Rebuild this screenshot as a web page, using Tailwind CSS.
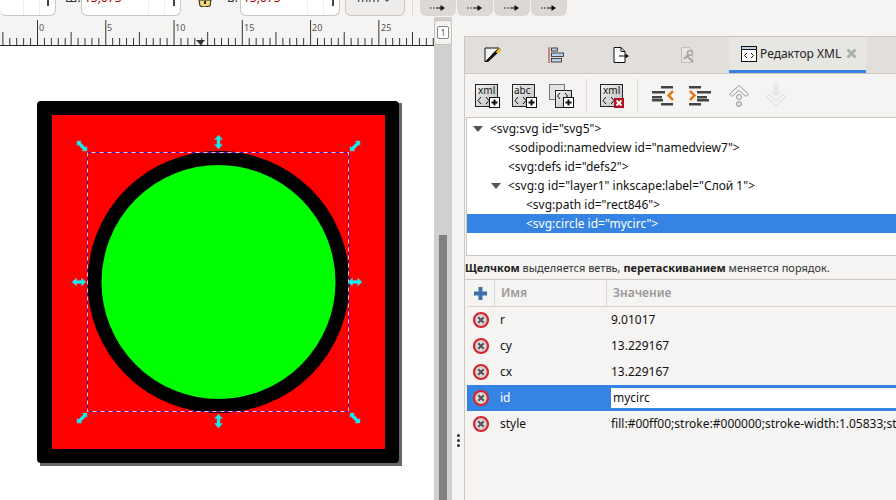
<!DOCTYPE html>
<html lang="ru">
<head>
<meta charset="UTF-8" />
<title>Inkscape - XML</title>
<script src="https://cdn.jsdelivr.net/npm/@tailwindcss/browser@4"></script>
</head>
<body class="m-0 bg-[#f5f4f2] font-['Noto_Sans','Liberation_Sans',sans-serif] text-[#111]">
<svg width="0" height="0" class="absolute">
  <defs>
    <linearGradient id="boxfill" x1="0" y1="0" x2="1" y2="1"><stop offset="0" stop-color="#f4f4f4"/><stop offset="1" stop-color="#bbb"/></linearGradient>
    <radialGradient id="delfill" cx=".5" cy=".5" r=".5"><stop offset="0" stop-color="#f2f2f2"/><stop offset="1" stop-color="#c9c9c9"/></radialGradient>
    <pattern id="ticks" patternUnits="userSpaceOnUse" x="37" y="0" width="68.27" height="28">
      <path d="M.5 3V28M7.3 21V28M14.2 21V28M21 21V28M27.8 21V28M34.6 15V28M41.5 21V28M48.3 21V28M55.1 21V28M62 21V28" stroke="#333" stroke-width="1" shape-rendering="crispEdges" fill="none"/>
    </pattern>
    <symbol id="del" viewBox="0 0 18 18">
      <circle cx="9" cy="9" r="7" fill="url(#delfill)" stroke="#d8232a" stroke-width="2.2"/>
      <path d="M6.3 6.3l5.4 5.4M11.7 6.3l-5.4 5.4" stroke="#555" stroke-width="2.2"/>
    </symbol>
    <symbol id="plusbox" viewBox="0 0 11 11">
      <rect x=".5" y=".5" width="10" height="10" fill="#fff" stroke="#111"/>
      <path d="M5.5 2.5v6M2.5 5.5h6" stroke="#111" stroke-width="2"/>
    </symbol>
    <symbol id="arrowbtn" viewBox="0 0 16 8">
      <path d="M0 4h1.500M3 4h1.500M6 4h5" stroke="#111" stroke-width="1.200"/>
      <path d="M10.500 1l4.500 3-4.500 3z" fill="#111"/>
    </symbol>
    <symbol id="hdiag" viewBox="0 0 12 12">
      <path d="M1 1h4.500l-1 1.500 5 5 1.500-1V11H6l1-1.500-5-5-1 1z" fill="#00f5f5" stroke="#7fa5a5" stroke-width=".5"/>
    </symbol>
    <symbol id="hdiag2" viewBox="0 0 12 12">
      <path d="M11 1H6.500l1 1.500-5 5-1.500-1V11H6l-1-1.500 5-5 1 1z" fill="#00f5f5" stroke="#7fa5a5" stroke-width=".5"/>
    </symbol>
  </defs>
</svg>

<div class="relative flex h-[500px] w-[896px] flex-col overflow-hidden bg-[#f5f4f2]">
  <!-- top toolbar -->
  <div class="flex h-[17px] shrink-0 items-start text-[12px] leading-[12px]">
    <div class="relative h-[16px] w-[56px] overflow-hidden rounded-b-md border-r border-b border-[#cdc7c2] bg-white">
      <div class="absolute left-[23px] top-0 h-full w-px bg-[#eeecea]"></div>
      <div class="absolute left-[39px] top-0 h-full w-px bg-[#eeecea]"></div>
      <div class="absolute left-[47px] top-0 h-[6px] w-[2px] bg-[#444]"></div>
    </div>
    <span class="ml-[9px] mt-[-8px] w-[16px] text-[#333]">Ш:</span>
    <div class="relative h-[16px] w-[100px] overflow-hidden rounded-b-md border-x border-b border-[#cdc7c2] bg-white">
      <span class="absolute left-[2px] top-[-8px] text-[#a00]">13,073</span>
      <div class="absolute left-[66px] top-0 h-full w-px bg-[#eeecea]"></div>
      <div class="absolute left-[82px] top-0 h-full w-px bg-[#eeecea]"></div>
      <div class="absolute left-[91px] top-0 h-[6px] w-[2px] bg-[#444]"></div>
    </div>
    <svg class="ml-[17px]" width="14" height="7" viewBox="0 0 14 7"><path d="M1 0h12l-1 6-6 1-4-1z" fill="#f3d873" stroke="#222"/><rect x="6" y="1" width="2" height="3" fill="#222"/></svg>
    <span class="ml-[15px] mt-[-8px] w-[13px] text-[#333]">В:</span>
    <div class="relative h-[16px] w-[100px] overflow-hidden rounded-b-md border-x border-b border-[#cdc7c2] bg-white">
      <span class="absolute left-[2px] top-[-8px] text-[#a00]">13,073</span>
      <div class="absolute left-[66px] top-0 h-full w-px bg-[#eeecea]"></div>
      <div class="absolute left-[82px] top-0 h-full w-px bg-[#eeecea]"></div>
      <div class="absolute left-[91px] top-0 h-[6px] w-[2px] bg-[#444]"></div>
    </div>
    <div class="relative ml-[5px] h-[16px] w-[60px] overflow-hidden rounded-b-md border-x border-b border-[#cdc7c2] bg-[#eeedeb]">
      <span class="absolute left-[11px] top-[-8px] text-[#333]">mm</span>
      <span class="absolute left-[37px] top-[-2px] h-0 w-0 border-x-[4px] border-t-[4px] border-x-transparent border-t-[#555]"></span>
    </div>
    <div class="ml-[7px] h-[16px] w-px bg-[#dcd9d6]"></div>
    <div class="ml-[7px] flex gap-px">
      <div class="flex h-[16px] w-[36px] items-center justify-center rounded-b-md bg-[#dcd8d4]"><svg width="16" height="8"><use href="#arrowbtn"/></svg></div>
      <div class="flex h-[16px] w-[36px] items-center justify-center rounded-b-md bg-[#dcd8d4]"><svg width="16" height="8"><use href="#arrowbtn"/></svg></div>
      <div class="flex h-[16px] w-[36px] items-center justify-center rounded-b-md bg-[#dcd8d4]"><svg width="16" height="8"><use href="#arrowbtn"/></svg></div>
      <div class="flex h-[16px] w-[36px] items-center justify-center rounded-b-md bg-[#dcd8d4]"><svg width="16" height="8"><use href="#arrowbtn"/></svg></div>
    </div>
  </div>

  <div class="flex min-h-0 flex-1">
    <!-- ruler and canvas -->
    <div class="flex w-[434px] shrink-0 flex-col">
      <svg class="h-[29px] w-[434px] shrink-0 font-['Noto_Sans','Liberation_Sans',sans-serif]" viewBox="0 0 434 29">
        <rect width="434" height="28" fill="url(#ticks)"/>
        <rect y="28" width="434" height="1" fill="#222"/>
        <g font-size="9" fill="#555">
          <text x="39" y="14">0</text><text x="107" y="14">5</text><text x="175" y="14">10</text>
          <text x="244" y="14">15</text><text x="312" y="14">20</text><text x="381" y="14">25</text>
        </g>
        <path d="M196 23h9l-4.500 5z" fill="#333"/>
      </svg>
      <div class="relative min-h-0 flex-1 bg-white">
        <svg class="absolute left-0 top-0" width="434" height="454" viewBox="0 46 434 454">
          <rect x="40" y="103" width="362" height="363" fill="#666"/>
          <rect x="37" y="101" width="362" height="362" rx="4" fill="#000"/>
          <rect x="52" y="115" width="333" height="334" fill="#ff0000"/>
          <circle cx="218.500" cy="282" r="124" fill="#00ff00" stroke="#000" stroke-width="14"/>
          <rect x="87.500" y="152.500" width="261" height="259" fill="none" stroke="#ffc0c0" stroke-width="1"/>
          <rect x="87.500" y="152.500" width="261" height="259" fill="none" stroke="#3c10c8" stroke-width="1" stroke-dasharray="4 4"/>
          <use href="#hdiag" x="76" y="140" width="12" height="12"/>
          <use href="#hdiag2" x="349" y="140" width="12" height="12"/>
          <use href="#hdiag2" x="76" y="412" width="12" height="12"/>
          <use href="#hdiag" x="349" y="412" width="12" height="12"/>
          <path id="hv" d="M218.500 135l4 4.500h-2.500v5h2.500l-4 4.500-4-4.500h2.500v-5h-2.500z" fill="#00f5f5" stroke="#7fa5a5" stroke-width=".5"/>
          <path d="M218.500 414l4 4.500h-2.500v5h2.500l-4 4.500-4-4.500h2.500v-5h-2.500z" fill="#00f5f5" stroke="#7fa5a5" stroke-width=".5"/>
          <path d="M72 282l4.500-4v2.500h5v-2.500l4.500 4-4.500 4v-2.500h-5v2.500z" fill="#00f5f5" stroke="#7fa5a5" stroke-width=".5"/>
          <path d="M348 282l4.500-4v2.500h5v-2.500l4.500 4-4.500 4v-2.500h-5v2.500z" fill="#00f5f5" stroke="#7fa5a5" stroke-width=".5"/>
        </svg>
      </div>
    </div>

    <!-- vertical scrollbar -->
    <div class="flex w-[18px] shrink-0 flex-col bg-[#d2d0ce]">
      <div class="mt-[3px] flex h-[25px] items-center justify-center rounded-[3px] border border-[#c9c5c0] bg-[#f3f2f0] text-[9px] leading-none text-[#555]">
        <span class="flex h-[13px] w-[12px] items-center justify-center rounded-[2px] border border-[#888] bg-white">1</span>
      </div>
      <div class="ml-[5px] mt-[190px] w-[8px] flex-1 bg-[#7f8181]"></div>
    </div>

    <!-- dock area -->
    <div class="flex min-w-0 flex-1">
      <div class="flex w-[12px] shrink-0 flex-col items-center pt-[417px]">
        <span class="mb-[2px] h-[3px] w-[3px] rounded-full bg-[#333]"></span>
        <span class="mb-[2px] h-[3px] w-[3px] rounded-full bg-[#333]"></span>
        <span class="h-[3px] w-[3px] rounded-full bg-[#333]"></span>
      </div>
      <div class="mt-[19px] flex min-w-0 flex-1 flex-col border-l border-[#cdc7c2]">
        <!-- tabs -->
        <div class="flex h-[38px] shrink-0 items-stretch border-y border-[#cdc7c2] bg-[#e1dedb]">
          <div class="flex w-[55px] items-center justify-center">
            <svg width="18" height="16" viewBox="0 0 18 16"><path d="M1 1h14L1 15z" fill="#f3f3f3" stroke="#111"/><path d="M1 15h3L17 3l-2-2-6 5-3 4z" fill="#111"/><path d="M12 5l3-4 2 2-3 4z" fill="#f0c419"/></svg>
          </div>
          <div class="flex w-[67px] items-center justify-center pl-[5px]">
            <svg width="17" height="16" viewBox="0 0 17 16"><rect x=".5" width="1" height="16" fill="#b22"/><rect x="3.500" y="1" width="6" height="3" fill="#b9d0e8" stroke="#222" stroke-width=".8"/><rect x="3.500" y="6" width="12" height="3.500" fill="#b9d0e8" stroke="#222" stroke-width=".8"/><rect x="3.500" y="11.500" width="10" height="3.500" fill="#b9d0e8" stroke="#222" stroke-width=".8"/></svg>
          </div>
          <div class="flex w-[64px] items-center justify-center pl-[3px]">
            <svg width="16" height="16" viewBox="0 0 16 16"><path d="M1 .5h7l4 4V15.500H1z" fill="#fff" stroke="#111"/><path d="M8 .5v4h4" fill="none" stroke="#111"/><path d="M6 9h7" stroke="#111"/><path d="M12.500 6.500L16 9l-3.500 2.500z" fill="#111"/></svg>
          </div>
          <div class="flex w-[78px] items-center justify-center pr-[5px]">
            <svg width="14" height="16" viewBox="0 0 14 16" opacity=".45"><path d="M.5.500h8l3 3v12H.5z" fill="#eee" stroke="#999"/><path d="M3 12l5-5" stroke="#666" stroke-width="2"/><circle cx="9" cy="6" r="2.500" fill="none" stroke="#666" stroke-width="1.500"/><path d="M6 9l6 6" stroke="#666" stroke-width="2"/></svg>
          </div>
          <div class="flex w-[137px] items-center border-b-[3px] border-[#3584e4] bg-[#e8e6e3] pl-[12px] text-[12px] leading-none text-[#222]">
            <svg class="mr-[3px]" width="16" height="16" viewBox="0 0 16 16"><rect x=".5" y=".5" width="15" height="15" fill="#fff" stroke="#111"/><rect x=".5" y=".5" width="15" height="3" fill="#bcd3ea" stroke="#111"/><path d="M6 7L3.500 9.500 6 12M10 7l2.500 2.500L10 12" fill="none" stroke="#111"/></svg>
            <span class="whitespace-nowrap">Редактор XML</span>
            <svg class="ml-[5px]" width="11" height="11" viewBox="0 0 11 11"><path d="M1.500 1.500l8 8M9.500 1.500l-8 8" stroke="#a9b0ae" stroke-width="3"/></svg>
          </div>
        </div>

        <!-- xml toolbar -->
        <div class="flex h-[43px] shrink-0 items-center pl-[10px]">
          <svg width="25" height="24" viewBox="0 0 25 24" class="font-['Noto_Sans',sans-serif]"><rect x=".5" y=".5" width="22" height="22" fill="url(#boxfill)" stroke="#222"/><text x="3" y="10" font-size="10" fill="#111">xml</text><path d="M6 13l-3 3.500 3 3.500M11 13l3 3.500-3 3.500" fill="none" stroke="#111"/><use href="#plusbox" x="14" y="13" width="11" height="11"/></svg>
          <svg class="ml-[12px]" width="25" height="24" viewBox="0 0 25 24" class="font-['Noto_Sans',sans-serif]"><rect x=".5" y=".5" width="22" height="22" fill="url(#boxfill)" stroke="#222"/><text x="2" y="10" font-size="10" fill="#111">abc</text><path d="M6 13l-3 3.500 3 3.500M11 13l3 3.500-3 3.500" fill="none" stroke="#111"/><use href="#plusbox" x="14" y="13" width="11" height="11"/></svg>
          <svg class="ml-[12px]" width="25" height="24" viewBox="0 0 25 24"><rect x=".5" y=".5" width="15" height="15" fill="#e4e4e4" stroke="#777"/><rect x="6.500" y="6.500" width="16" height="17" fill="url(#boxfill)" stroke="#222"/><path d="M11 9l-2.500 3 2.500 3M16 9l2.500 3-2.500 3" fill="none" stroke="#111"/><use href="#plusbox" x="14" y="13" width="11" height="11"/></svg>
          <div class="ml-[12px] h-[34px] w-px bg-[#dcd9d6]"></div>
          <svg class="ml-[13px]" width="25" height="24" viewBox="0 0 25 24"><rect x=".5" y=".5" width="22" height="22" fill="url(#boxfill)" stroke="#222"/><text x="3" y="10" font-size="10" fill="#111">xml</text><path d="M6 13l-3 3.500 3 3.500M11 13l3 3.500-3 3.500" fill="none" stroke="#111"/><rect x="14" y="14" width="10" height="10" fill="#b01020"/><path d="M16.500 16.500l5 5M21.500 16.500l-5 5" stroke="#fff" stroke-width="2"/></svg>
          <div class="ml-[12px] h-[34px] w-px bg-[#dcd9d6]"></div>
          <svg class="ml-[14px]" width="24" height="20" viewBox="0 0 24 20"><g fill="#444"><rect x="9" y="0" width="12" height="2.500"/><rect x="0" y="5" width="13" height="2.500"/><rect x="0" y="10" width="10" height="2.500"/><rect x="0" y="15" width="13" height="2.500" opacity="0"/><rect x="9" y="17" width="12" height="2.500"/><rect x="0" y="13" width="11" height="2.500"/></g><path d="M21 5l-4.500 4.500L21 14" fill="none" stroke="#e07b1c" stroke-width="2.500"/></svg>
          <svg class="ml-[13px]" width="24" height="20" viewBox="0 0 24 20"><g fill="#444"><rect x="0" y="0" width="12" height="2.500"/><rect x="8" y="5" width="14" height="2.500"/><rect x="8" y="10" width="10" height="2.500"/><rect x="8" y="13" width="12" height="2.500"/><rect x="0" y="17" width="12" height="2.500"/></g><path d="M1 5l4.500 4.500L1 14" fill="none" stroke="#e07b1c" stroke-width="2.500"/></svg>
          <svg class="ml-[15px]" width="22" height="24" viewBox="0 0 22 24"><path d="M1.500 10L11 1.500 20.500 10 18 12.500 11 6.500 4 12.500z" fill="#f5f4f2" stroke="#999"/><circle cx="11" cy="13" r="2.500" fill="#eee" stroke="#999"/><circle cx="11" cy="20" r="2.500" fill="#ddd" stroke="#999"/></svg>
          <svg class="ml-[15px]" width="22" height="24" viewBox="0 0 22 24" opacity=".45"><circle cx="11" cy="2.500" r="2.200" fill="#eee" stroke="#bbb"/><circle cx="11" cy="9" r="2.200" fill="#eee" stroke="#bbb"/><path d="M1.500 13L11 21.500 20.500 13 18 10.500 11 16.500 4 10.500z" fill="#f5f4f2" stroke="#bbb"/></svg>
        </div>

        <!-- node tree -->
        <div class="ml-[1px] h-[139px] shrink-0 border-y border-l border-[#cdc7c2] bg-white pt-[1px] text-[12px] leading-[19px] text-[#111]">
          <div class="flex h-[19px] items-center pl-[6px]"><span class="mr-[7px] h-0 w-0 border-x-[5px] border-t-[6px] border-x-transparent border-t-[#555]"></span><span class="whitespace-nowrap">&lt;svg:svg id="svg5"&gt;</span></div>
          <div class="h-[19px] whitespace-nowrap pl-[41px]">&lt;sodipodi:namedview id="namedview7"&gt;</div>
          <div class="h-[19px] whitespace-nowrap pl-[41px]">&lt;svg:defs id="defs2"&gt;</div>
          <div class="flex h-[19px] items-center pl-[24px]"><span class="mr-[7px] h-0 w-0 border-x-[5px] border-t-[6px] border-x-transparent border-t-[#555]"></span><span class="whitespace-nowrap">&lt;svg:g id="layer1" inkscape:label="Слой 1"&gt;</span></div>
          <div class="h-[19px] whitespace-nowrap pl-[59px]">&lt;svg:path id="rect846"&gt;</div>
          <div class="h-[19px] whitespace-nowrap bg-[#3584e4] pl-[59px] text-white">&lt;svg:circle id="mycirc"&gt;</div>
        </div>

        <!-- hint -->
        <div class="h-[24px] shrink-0 whitespace-nowrap border-b border-[#cdc7c2] text-[11px] leading-[23px] text-[#333]"><b class="text-[#222]">Щелчком</b> выделяется ветвь, <b class="text-[#222]">перетаскиванием</b> меняется порядок.</div>

        <!-- attributes -->
        <div class="ml-[2px] text-[12px]">
          <div class="flex h-[27px] items-center border-b border-[#d8d5d2] font-semibold text-[#9a9a9a]">
            <div class="flex h-full w-[28px] items-center justify-center border-r border-[#dcd9d6]"><svg width="13" height="13" viewBox="0 0 13 13"><path d="M4.500 0h4v4.500H13v4H8.500V13h-4V8.500H0v-4h4.500z" fill="#3f70a8"/></svg></div>
            <div class="flex h-full w-[112px] items-center border-r border-[#dcd9d6] pl-[6px]">Имя</div>
            <div class="pl-[6px]">Значение</div>
          </div>
          <div class="flex h-[26px] items-center"><svg class="ml-[5px] w-[18px]" height="18"><use href="#del"/></svg><span class="ml-[10px] w-[111px]">r</span><span>9.01017</span></div>
          <div class="flex h-[26px] items-center"><svg class="ml-[5px] w-[18px]" height="18"><use href="#del"/></svg><span class="ml-[10px] w-[111px]">cy</span><span>13.229167</span></div>
          <div class="flex h-[26px] items-center"><svg class="ml-[5px] w-[18px]" height="18"><use href="#del"/></svg><span class="ml-[10px] w-[111px]">cx</span><span>13.229167</span></div>
          <div class="flex h-[26px] items-center bg-[#3584e4] text-white"><svg class="ml-[5px] w-[18px]" height="18"><use href="#del"/></svg><span class="ml-[10px] w-[111px]">id</span><span class="flex h-[20px] flex-1 items-center bg-white pl-[2px] text-[#111]">mycirc</span></div>
          <div class="flex h-[26px] items-center overflow-hidden"><svg class="ml-[5px] w-[18px] shrink-0" height="18"><use href="#del"/></svg><span class="ml-[10px] w-[111px] shrink-0">style</span><span class="whitespace-nowrap">fill:#00ff00;stroke:#000000;stroke-width:1.05833;stroke-opacity:1</span></div>
        </div>
      </div>
    </div>
  </div>
</div>
</body>
</html>
